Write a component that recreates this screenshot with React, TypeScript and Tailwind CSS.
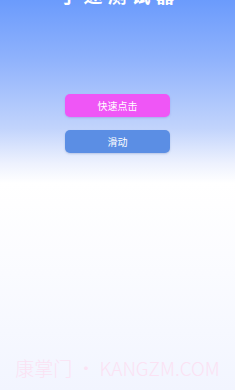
export default function App() {
  return (
    <div
      className="relative h-[390px] w-[235px] overflow-hidden bg-[linear-gradient(180deg,#6b9bfc_0%,#8fb2fc_15%,#c2d4fc_33%,#eef2fe_42%,#ffffff_47%,#fafbff_70%,#f2f5ff_100%)]"
      style={{ fontFamily: '"Noto Sans CJK SC", "Noto Sans", sans-serif' }}
    >
      {/* 标题 (页面已滚动, 只露出下半部分) */}
      <h1 className="mt-[-19px] pl-[4px] text-center text-[19px] font-bold leading-[28px] tracking-[5px] text-white">
        手速测试器
      </h1>

      {/* 按钮 */}
      <div className="mt-[85px] flex flex-col items-center gap-[13px]">
        <button className="h-[23px] w-[105px] rounded-[5px] bg-[#ef56f6] text-[10px] text-white shadow-[0_1px_2px_rgba(120,80,200,0.25)]">
          快速点击
        </button>
        <button className="h-[23px] w-[105px] rounded-[5px] bg-[#5b8ee4] text-[10px] text-white shadow-[0_1px_2px_rgba(60,90,160,0.25)]">
          滑动
        </button>
      </div>

      {/* 水印 */}
      <div className="absolute bottom-[10px] left-0 right-0 text-center text-[19px] font-light leading-[24px] text-[#fbe2f3]">
        康掌门 • KANGZM.COM
      </div>
    </div>
  );
}
